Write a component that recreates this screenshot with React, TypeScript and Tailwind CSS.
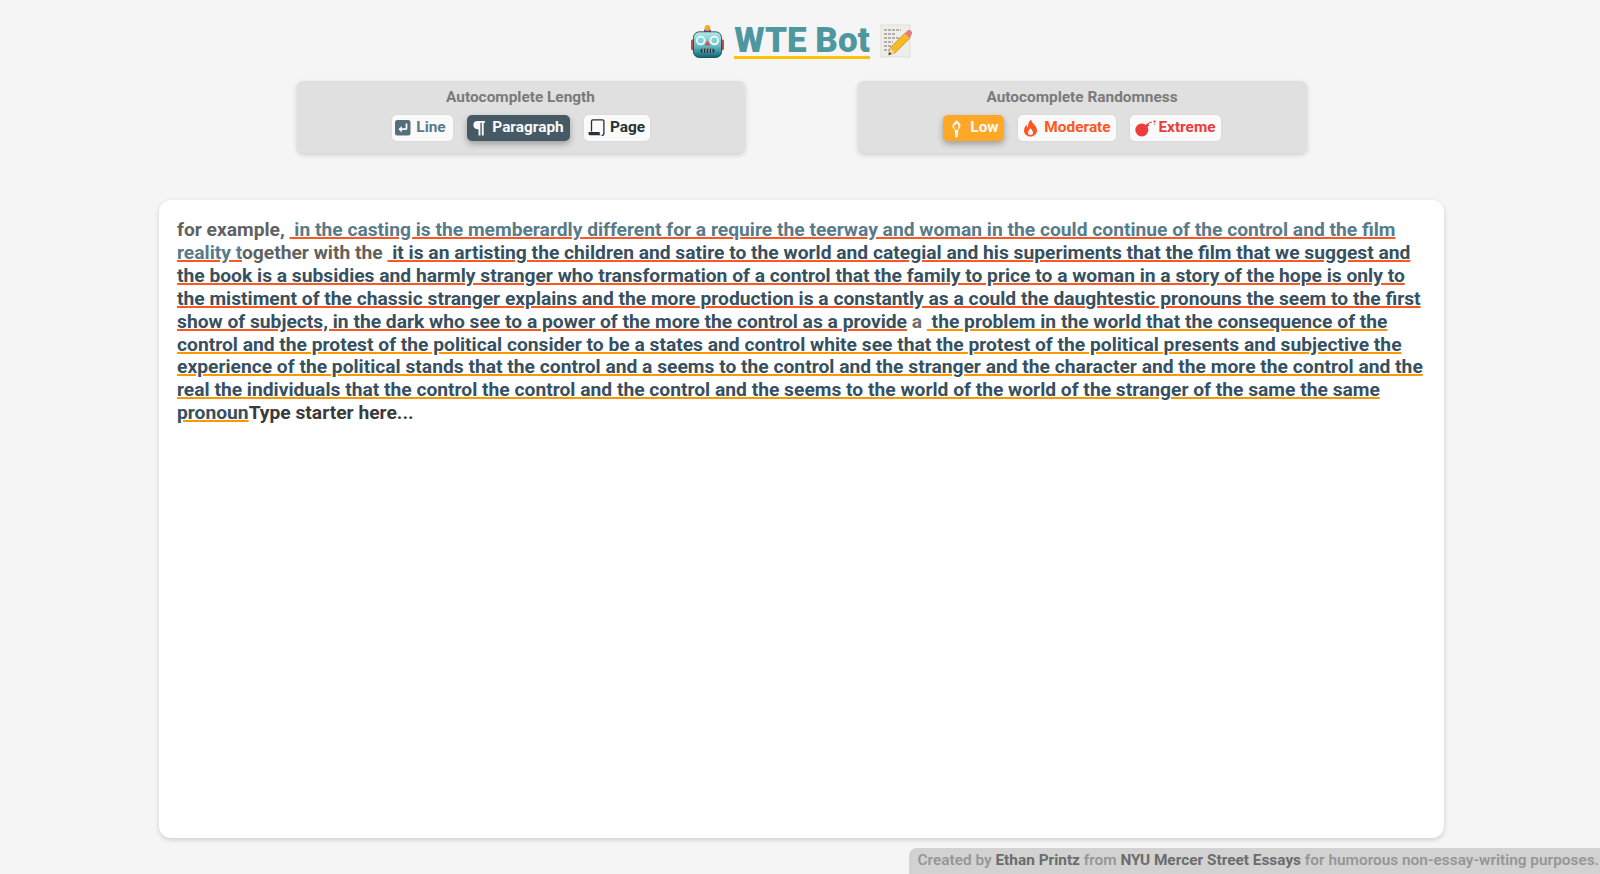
import React from "react";

const Robot = () => (
  <svg width="33" height="33" viewBox="0 0 34 34">
    <rect x="0" y="15" width="4" height="11" rx="1.5" fill="#c0504d" />
    <rect x="30" y="15" width="4" height="11" rx="1.5" fill="#c0504d" />
    <rect x="13.500" y="4.500" width="7" height="3.500" rx="1" fill="#6a3fa0" />
    <circle cx="17" cy="3" r="3" fill="#f9a825" />
    <defs>
      <linearGradient id="rb" x1="0" y1="0" x2="0" y2="1">
        <stop offset="0" stopColor="#b5e6e8" />
        <stop offset="0.55" stopColor="#68bcc3" />
        <stop offset="1" stopColor="#076876" />
      </linearGradient>
    </defs>
    <rect x="2.500" y="7" width="29" height="26.500" rx="6" fill="url(#rb)" stroke="#14323a" strokeWidth="0.8" />
    <circle cx="10" cy="16" r="4" fill="#7fd0e0" stroke="#f4fdff" strokeWidth="1.800" />
    <circle cx="24" cy="16" r="4" fill="#7fd0e0" stroke="#f4fdff" strokeWidth="1.800" />
    <path d="M17 16l3 5h-6z" fill="#e0493f" />
    <rect x="10" y="24.500" width="14" height="4" rx="1.500" fill="#20303a" />
    <path d="M12.500 24.500v4M15.500 24.500v4M18.500 24.500v4M21.500 24.500v4" stroke="#dfe8ea" strokeWidth="0.9" />
  </svg>
);

const Memo = () => (
  <svg width="32" height="34" viewBox="0 0 32 34">
    <rect x="1" y="1" width="29" height="32" fill="#efede9" stroke="#dcd9d3" strokeWidth="0.8" />
    <path d="M4 6h17M4 10h12M4 14h15M4 18h9M4 22h7M4 26h6" stroke="#77746e" strokeWidth="1" strokeDasharray="3 1" />
    <path d="M10 24L25 9l5 5-15 15-6.500 2z" fill="#f7b924" stroke="#b87f12" strokeWidth="0.6" />
    <path d="M25 9l2.500-2.500a2 2 0 0 1 3 0l1 1a2 2 0 0 1 0 3L30 14z" fill="#e77a83" />
    <path d="M10 24l5 5-6.500 2z" fill="#f1d6ad" />
    <path d="M8.500 31l1-3 2 2z" fill="#333" />
  </svg>
);

const LineIcon = () => (
  <svg width="16" height="16" viewBox="0 0 16 16">
    <rect width="15.500" height="15.500" rx="2.500" fill="#546e7a" />
    <path d="M11.500 3.500v4.700a1 1 0 0 1-1 1H5.500" fill="none" stroke="#fafafa" strokeWidth="1.800" />
    <path d="M6.800 6L3.400 9.200l3.400 3.200z" fill="#fafafa" />
  </svg>
);

const ParaIcon = () => (
  <svg width="14" height="16" viewBox="0 0 14 16">
    <path d="M5.500 1H13v1.800H11.700V15.500H9.800V2.800H8.400V15.500H6.500V9.200H5.500a4.100 4.100 0 0 1 0-8.200z" fill="#fafafa" />
  </svg>
);

const PageIcon = () => (
  <svg width="17" height="18" viewBox="0 0 17 18">
    <path d="M3.500 12.500V2.200a1.400 1.400 0 0 1 1.400-1.400H14.500a1.400 1.400 0 0 1 1.400 1.400V15" fill="none" stroke="#263238" strokeWidth="1.300" />
    <path d="M0.500 13h11.200v1.500c0 1 .8 1.800 2 1.800H2.400A1.900 1.900 0 0 1 .5 14.400z" fill="#263238" />
    <path d="M15.900 15a1.800 1.800 0 0 1-2.200 1.300" fill="none" stroke="#263238" strokeWidth="1.300" />
  </svg>
);

const TorchIcon = () => (
  <svg width="13" height="19" viewBox="0 0 13 19">
    <path d="M6.500.5C7 2.300 4 3 2.800 5.300c-1 2.200.1 4.200 1.800 5.200V8.700C3.700 7.700 3.900 6.300 5 5.200c.4 1 1.200.6 1.800-1.200 1.400 1.200 2.300 3.200 1.400 4.700v1.800c1.700-1 2.800-3 2-5.200C9.500 3.300 6.900 2.500 6.500.5z" fill="#fafafa" />
    <path d="M4.600 10.800h3.800l-.9 7.400H5.500z" fill="#fafafa" />
  </svg>
);

const FlameIcon = () => (
  <svg width="15" height="18" viewBox="0 0 15 18">
    <path
      fillRule="evenodd"
      d="M8 .5c.6 2.700 2.400 4 3.800 5.800 1.200 1.500 2.200 3.200 2.200 5.200 0 3.600-2.900 6-6.500 6S1 15.100 1 11.500c0-2.300 1.100-4.200 2.500-5.700.1 1.300.6 2.200 1.500 2.700C4.700 5.300 5.800 2.300 8 .5zM7.500 9.300c-1.300 1.500-2.500 2.800-2.500 4.200a2.500 2.500 0 0 0 5 0c0-1.400-1.200-2.700-2.500-4.200z"
      fill="#ff5722"
    />
  </svg>
);

const BombIcon = () => (
  <svg width="21" height="17" viewBox="0 0 21 17">
    <circle cx="6.800" cy="10" r="6.500" fill="#ef3b3b" />
    <path d="M10.500 5.500l1.800-2.200 2 1.600-1.800 2.300z" fill="#ef3b3b" />
    <path d="M13 3.800C14.500 2.500 15.500 2 17 2.300" fill="none" stroke="#ef3b3b" strokeWidth="1" />
    <rect x="18.500" y="0.500" width="2" height="2" fill="#ef3b3b" />
    <rect x="19.200" y="3.800" width="1" height="1" fill="#ef3b3b" />
  </svg>
);

const Btn = ({
  icon,
  label,
  color,
  active,
  activeBg,
  size,
}: {
  icon: React.ReactNode;
  label: string;
  color: string;
  active?: boolean;
  activeBg?: string;
  size: string;
}) => (
  <div
    className={
      "flex h-[26px] items-center justify-center rounded-[5px] text-[15.4px] font-bold " +
      size +
      " " +
      (active ? "shadow-[0_3px_6px_rgba(0,0,0,0.3)]" : "shadow-[0_0_3px_rgba(0,0,0,0.06)]")
    }
    style={{ backgroundColor: active ? activeBg : "#fafafa", color: active ? "#fafafa" : color }}
  >
    <span className="flex items-center justify-center">{icon}</span>
    <span>{label}</span>
  </div>
);

const Panel = ({ title, width, children }: { title: string; width: string; children: React.ReactNode }) => (
  <div className={"flex h-[72px] flex-col items-center rounded-[6px] bg-[#e0e0e0] pt-[7px] shadow-[0_2px_5px_rgba(0,0,0,0.16)] " + width}>
    <div className="text-[15.4px] leading-[18px] font-bold text-[#7a7a7a]">{title}</div>
    <div className="mt-[9px] flex gap-[14px]">{children}</div>
  </div>
);

type Seg = [string, string, string?];
const A = "#587a8a";
const B = "#37505f";
const G = "#616161";
const R = "#ff5722";
const O = "#ff9800";

const segs: Seg[] = [
  ["for example, ", G],
  ["\u00a0in the casting is the memberardly different for a require the teerway and woman in the could continue of the control and the film reality t", A, R],
  ["ogether with the\u00a0", G],
  ["\u00a0it is an artisting the children and satire to the world and categial and his superiments that the film that we suggest and the book is a subsidies and harmly stranger who transformation of a control that the family to price to a woman in a story of the hope is only to the mistiment of the chassic stranger explains and the more production is a constantly as a could the daughtestic pronouns the seem to the first show of subjects, in the dark who see to a power of the more the control as a provide", B, R],
  ["\u00a0a\u00a0", "#6d6d6d"],
  ["\u00a0the problem in the world that the consequence of the control and the protest of the political consider to be a states and control white see that the protest of the political presents and subjective the experience of the political stands that the control and a seems to the control and the stranger and the character and the more the control and the real the individuals that the control the control and the control and the seems to the world of the world of the stranger of the same the same pronoun", B, O],
];

export default function App() {
  return (
    <div
      className="flex h-[874px] flex-col items-center overflow-hidden bg-[#f5f5f5] pl-[3px]"
      style={{ fontFamily: "Roboto, 'Liberation Sans', sans-serif" }}
    >
      <div className="mt-[21px] flex h-[40px] items-center gap-[10px]">
        <Robot />
        <span className="mt-[1px] border-b-[3px] border-[#ffc107] text-[35px] leading-[31px] font-black text-[#4f979f]">WTE Bot</span>
        <Memo />
      </div>
      <div className="mt-[20px] flex gap-[113px]">
        <Panel title="Autocomplete Length" width="w-[448px]">
          <Btn size="w-[61px] gap-[5px] pr-[3px]" icon={<LineIcon />} label="Line" color="#587a8a" />
          <Btn size="w-[103px] gap-[6px]" icon={<ParaIcon />} label="Paragraph" color="#fff" active activeBg="#455a64" />
          <Btn size="w-[66px] gap-[5px]" icon={<PageIcon />} label="Page" color="#263238" />
        </Panel>
        <Panel title="Autocomplete Randomness" width="w-[449px]">
          <Btn size="w-[61px] gap-[7px] pl-[2px]" icon={<TorchIcon />} label="Low" color="#fff" active activeBg="#ffa726" />
          <Btn size="w-[98px] gap-[6px]" icon={<FlameIcon />} label="Moderate" color="#ff5722" />
          <Btn size="w-[91px] gap-[2px]" icon={<BombIcon />} label="Extreme" color="#ef3b3b" />
        </Panel>
      </div>
      <div className="mt-[47px] h-[638px] w-[1285px] rounded-[12px] bg-white px-[18px] pt-[19px] shadow-[0_2px_5px_rgba(0,0,0,0.16)]">
        <div className="text-[19.24px] leading-[22.9px] font-bold text-[#3a3a3a]">
          {segs.map(([t, c, u], i) => (
            <span
              key={i}
              style={{
                color: c,
                textDecorationLine: u ? "underline" : "none",
                textDecorationColor: u,
                textDecorationThickness: u ? "2px" : undefined,
              }}
            >
              {t}
            </span>
          ))}
          <span>Type starter here...</span>
        </div>
      </div>
      <div className="mt-[10px] flex h-[26px] items-center self-end rounded-tl-[8px] bg-[#d2d2d2] pr-[1px] pl-[8px] text-[15.4px] font-semibold whitespace-nowrap text-[#969696]">
        <span>
          Created by <span className="font-bold text-[#6c6c6c]">Ethan Printz</span> from{" "}
          <span className="font-bold text-[#6c6c6c]">NYU Mercer Street Essays</span> for humorous non-essay-writing purposes.
        </span>
      </div>
    </div>
  );
}
